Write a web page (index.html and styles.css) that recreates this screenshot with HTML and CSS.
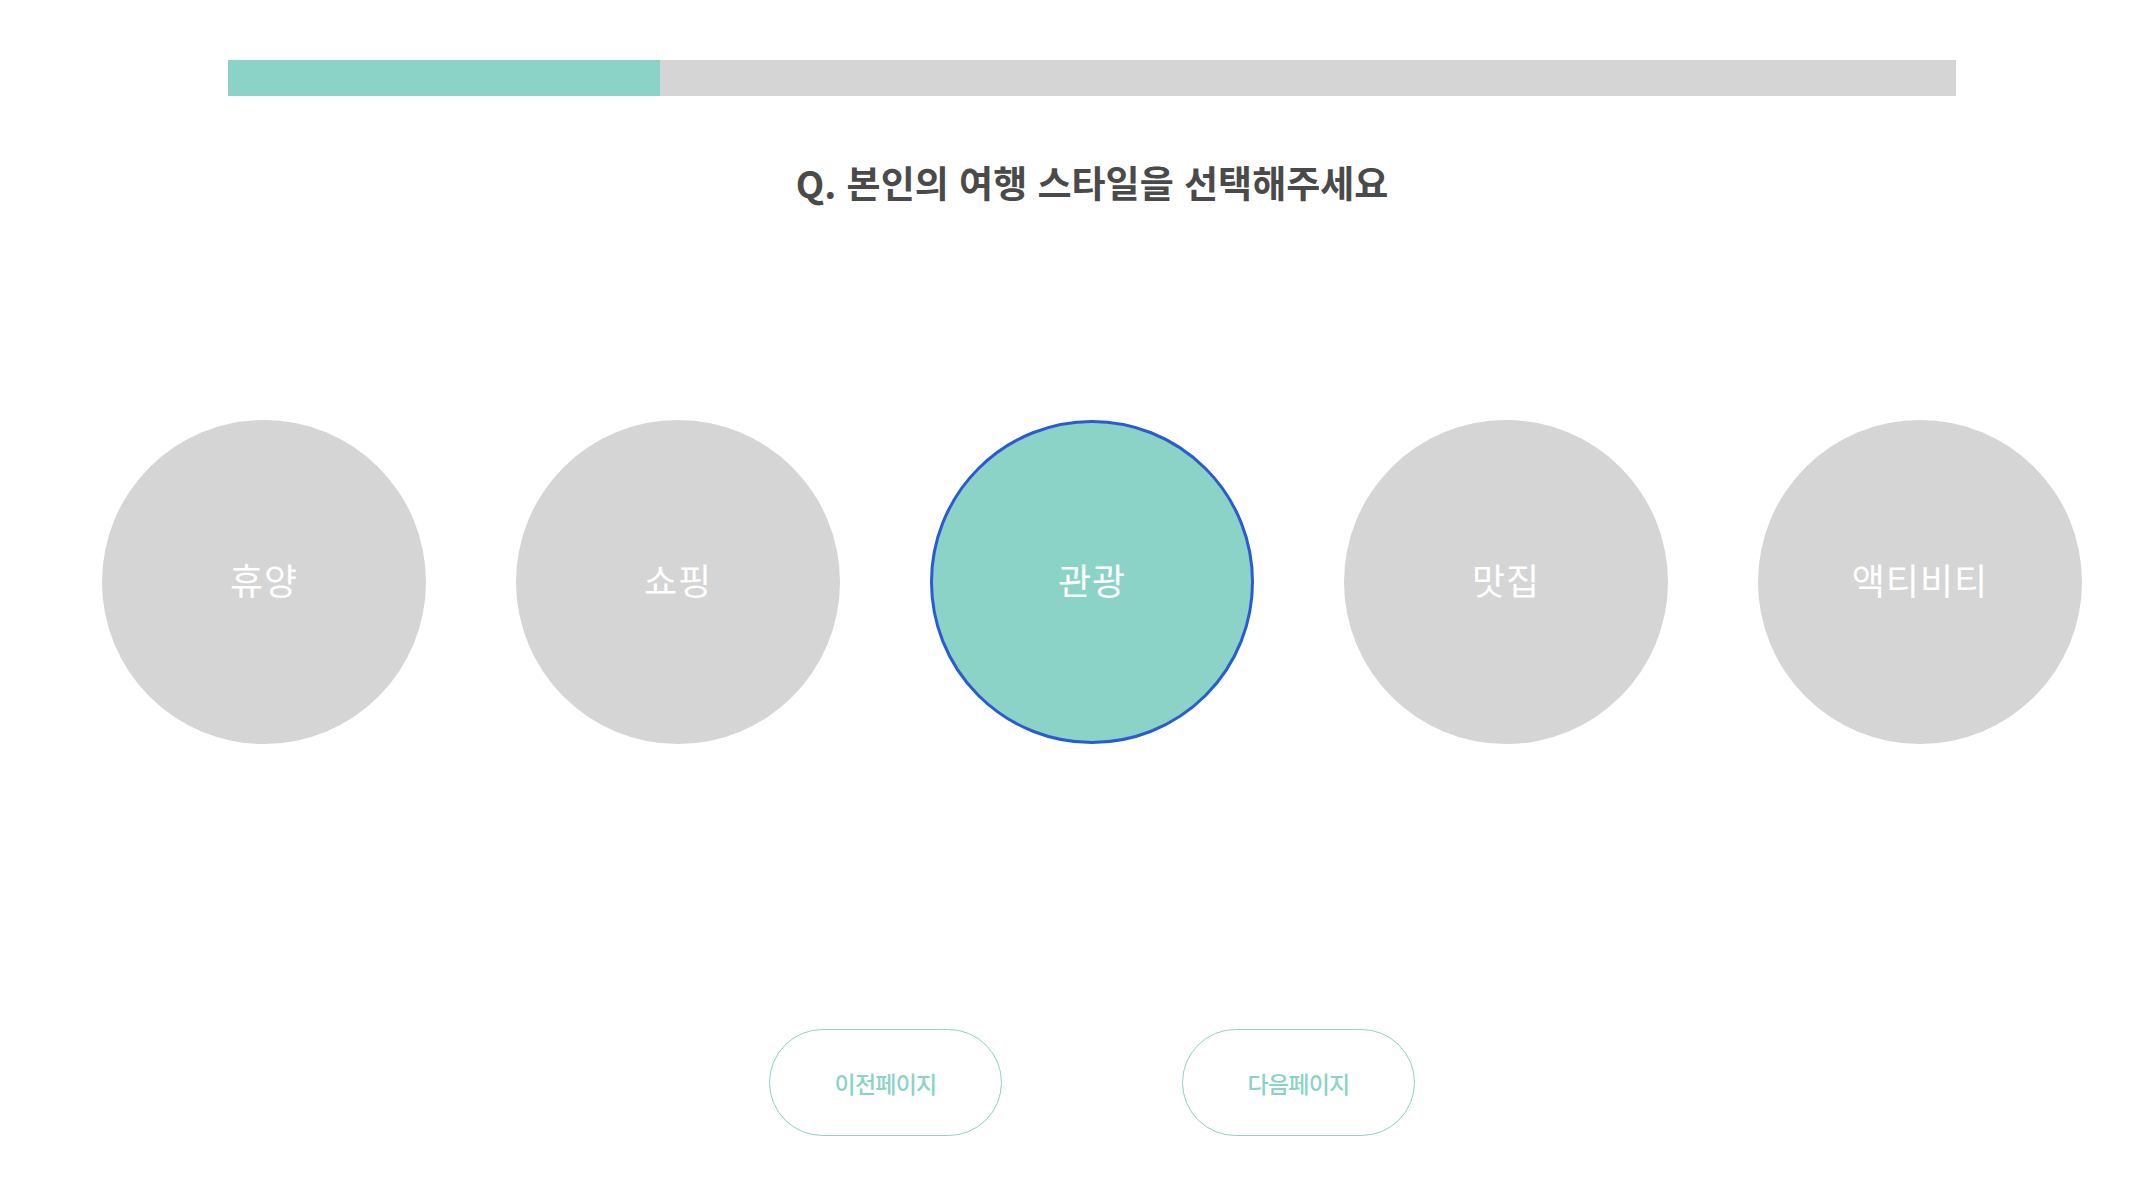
FILE: index.html
```html
<!DOCTYPE html>
<html lang="ko">
<head>
<meta charset="utf-8">
<title>여행 스타일 선택</title>
<link rel="stylesheet" href="styles.css">
</head>
<body>
<main class="page">
  <div class="progress"><div class="progress-fill" style="width:25%"></div></div>
  <h1 class="question">Q. 본인의 여행 스타일을 선택해주세요</h1>
  <div class="options">
    <button class="option">휴양</button>
    <button class="option">쇼핑</button>
    <button class="option selected">관광</button>
    <button class="option">맛집</button>
    <button class="option">액티비티</button>
  </div>
  <div class="nav">
    <button class="nav-btn">이전페이지</button>
    <button class="nav-btn">다음페이지</button>
  </div>
</main>
</body>
</html>
```
FILE: styles.css
```css
html, body {
  margin: 0;
  padding: 0;
  background: #ffffff;
}
body {
  font-family: "Noto Sans CJK KR", "Noto Sans", sans-serif;
}
.page {
  padding-left: 30px;
  display: flex;
  flex-direction: column;
  align-items: center;
}
.progress {
  margin-top: 60px;
  width: 1728px;
  height: 36px;
  background: #d5d5d5;
}
.progress-fill {
  height: 100%;
  background: #8bd3c7;
}
.question {
  margin: 66px 0 0;
  font-size: 37px;
  line-height: 40px;
  font-weight: 700;
  letter-spacing: 0;
  color: #4a4a4a;
}
.options {
  margin-top: 218px;
  display: flex;
  gap: 90px;
}
.option {
  width: 324px;
  height: 324px;
  box-sizing: border-box;
  border-radius: 50%;
  border: none;
  background: #d5d5d5;
  color: #ffffff;
  font-family: inherit;
  font-size: 36px;
  font-weight: 400;
  letter-spacing: 1px;
  padding: 0 0 6px;
  display: flex;
  align-items: center;
  justify-content: center;
}
.option.selected {
  background: #8bd3c7;
  border: 3px solid #2b5bd0;
}
.nav {
  margin-top: 285px;
  display: flex;
  gap: 180px;
}
.nav-btn {
  width: 233px;
  height: 107px;
  box-sizing: border-box;
  border: 1px solid #8bd3c7;
  border-radius: 54px;
  background: #ffffff;
  color: #8bd3c7;
  font-family: inherit;
  font-size: 23px;
  font-weight: 500;
  letter-spacing: -0.8px;
  padding: 0;
}
```
